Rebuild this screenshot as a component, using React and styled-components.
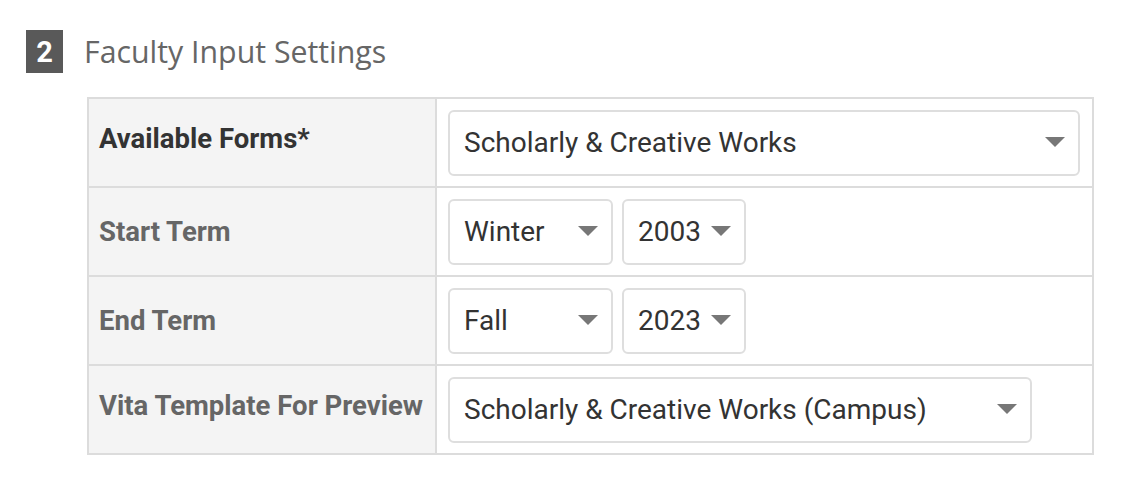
import React from "react";
import styled, { createGlobalStyle } from "styled-components";

const Global = createGlobalStyle`
  html, body { margin: 0; padding: 0; background: #fff; }
  body { font-family: Roboto, "Liberation Sans", sans-serif; }
`;

const Page = styled.div`
  padding: 30px 0 0 26px;
`;

const Header = styled.div`
  display: flex;
  align-items: center;
  gap: 21px;
`;

const Badge = styled.div`
  width: 37px;
  height: 43px;
  background: #595959;
  color: #fff;
  font-family: Roboto, "Liberation Sans", sans-serif;
  font-weight: 700;
  font-size: 29px;
  display: flex;
  align-items: center;
  justify-content: center;
`;

const Title = styled.h2`
  margin: 0;
  font-family: "Open Sans", Lato, sans-serif;
  font-weight: 400;
  font-size: 30.3px;
  color: #666;
`;

const Table = styled.div`
  margin: 24px 0 0 61px;
  width: 1007px;
  box-sizing: border-box;
  border: 2px solid #dcdcdc;
`;

const Row = styled.div`
  display: flex;
  height: 87px;
  & + & {
    border-top: 2px solid #dcdcdc;
  }
`;

const LabelCell = styled.div`
  flex: none;
  width: 336px;
  box-sizing: content-box;
  background: #f4f4f4;
  border-right: 2px solid #dcdcdc;
  display: flex;
  align-items: center;
  padding: 0 0 ${(p) => (p.$lift ? "8px" : "0")} 10px;
  font-size: 27.5px;
  font-weight: 700;
  color: ${(p) => (p.$required ? "#333" : "#666")};
`;

const ValueCell = styled.div`
  flex: 1;
  display: flex;
  align-items: center;
  gap: 9px;
  padding: 0 11px 0 11px;
`;

const Select = styled.div`
  position: relative;
  box-sizing: border-box;
  height: 66px;
  width: ${(p) => p.$width || "auto"};
  border: 2px solid #dedede;
  border-radius: 6px;
  background: #fff;
  display: flex;
  align-items: center;
  padding: 0 43px 0 14px;
  font-size: 28px;
  color: #333;
  white-space: nowrap;
`;

const Arrow = styled.span`
  position: absolute;
  right: 13px;
  top: 50%;
  margin-top: -6px;
  width: 0;
  height: 0;
  border-left: 10px solid transparent;
  border-right: 10px solid transparent;
  border-top: 10px solid #777;
`;

const Dropdown = ({ value, width }) => (
  <Select $width={width}>
    {value}
    <Arrow />
  </Select>
);

export default function App() {
  return (
    <>
      <Global />
      <Page>
        <Header>
          <Badge>2</Badge>
          <Title>Faculty Input Settings</Title>
        </Header>
        <Table>
          <Row>
            <LabelCell $required $lift>Available Forms*</LabelCell>
            <ValueCell>
              <Dropdown value="Scholarly & Creative Works" width="632px" />
            </ValueCell>
          </Row>
          <Row>
            <LabelCell>Start Term</LabelCell>
            <ValueCell>
              <Dropdown value="Winter" width="165px" />
              <Dropdown value="2003" />
            </ValueCell>
          </Row>
          <Row>
            <LabelCell>End Term</LabelCell>
            <ValueCell>
              <Dropdown value="Fall" width="165px" />
              <Dropdown value="2023" />
            </ValueCell>
          </Row>
          <Row>
            <LabelCell $lift>Vita Template For Preview</LabelCell>
            <ValueCell>
              <Dropdown value="Scholarly & Creative Works (Campus)" width="584px" />
            </ValueCell>
          </Row>
        </Table>
      </Page>
    </>
  );
}
